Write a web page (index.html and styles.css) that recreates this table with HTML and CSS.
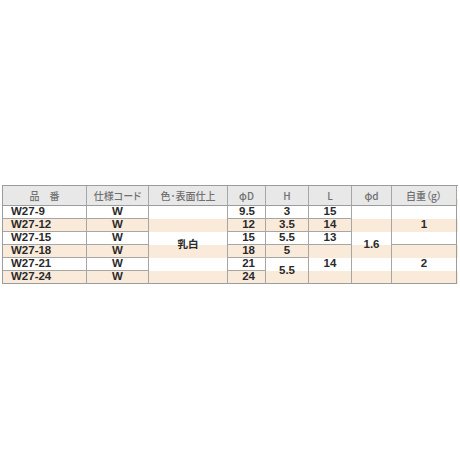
FILE: index.html
```html
<!DOCTYPE html>
<html lang="ja">
<head>
<meta charset="utf-8">
<link rel="stylesheet" href="styles.css">
</head>
<body>
<div class="spec">
  <div class="hd">品　番</div>
  <div class="hd">仕様コード</div>
  <div class="hd">色･表面仕上</div>
  <div class="hd">φD</div>
  <div class="hd">H</div>
  <div class="hd">L</div>
  <div class="hd">φd</div>
  <div class="hd">自重（g）</div>

  <div class="c code r1">W27-9</div>
  <div class="c mid r1 c2">W</div>
  <div class="c mid cj c3 span6">乳白</div>
  <div class="c num r1 c4">9.5</div>
  <div class="c mid r1 c5">3</div>
  <div class="c mid r1 c6">15</div>
  <div class="c mid c7 span6">1.6</div>
  <div class="c mid c8 span3a">1</div>

  <div class="c code r2">W27-12</div>
  <div class="c mid r2 c2">W</div>
  <div class="c num r2 c4">12</div>
  <div class="c mid r2 c5">3.5</div>
  <div class="c mid r2 c6">14</div>

  <div class="c code r3">W27-15</div>
  <div class="c mid r3 c2">W</div>
  <div class="c num r3 c4">15</div>
  <div class="c mid r3 c5">5.5</div>
  <div class="c mid r3 c6">13</div>

  <div class="c code r4">W27-18</div>
  <div class="c mid r4 c2">W</div>
  <div class="c num r4 c4">18</div>
  <div class="c mid r4 c5">5</div>
  <div class="c mid c6 span3b">14</div>
  <div class="c mid c8 span3b">2</div>

  <div class="c code r5">W27-21</div>
  <div class="c mid r5 c2">W</div>
  <div class="c num r5 c4">21</div>
  <div class="c mid c5 span2">5.5</div>

  <div class="c code r6">W27-24</div>
  <div class="c mid r6 c2">W</div>
  <div class="c num r6 c4">24</div>
</div>
</body>
</html>
```

FILE: styles.css
```css
html, body {
  margin: 0;
  padding: 0;
  background: #ffffff;
}

body {
  width: 460px;
  height: 460px;
  padding-top: 185px;
  padding-left: 2px;
  box-sizing: border-box;
}

.spec {
  display: grid;
  width: 455px;
  grid-template-columns: 84px 62px 79px 38px 43px 43px 40px 65px;
  grid-template-rows: 20px repeat(6, 13px);
  border-left: 1px solid #9c9c9c;
  border-top: 1px solid #9c9c9c;
  background-image: repeating-linear-gradient(to bottom, #ffffff 0, #ffffff 13px, #faeada 13px, #faeada 26px);
  background-position: 0 20px;
  font-family: "Liberation Sans", Arial, sans-serif;
}

.hd {
  background: #e8e8e8;
  color: #707070;
  font-family: "Noto Sans CJK JP", "Noto Sans", sans-serif;
  font-size: 10px;
  font-weight: 500;
  font-feature-settings: "palt";
  display: flex;
  align-items: center;
  justify-content: center;
  border-right: 1px solid #a6a6a6;
  border-bottom: 1px solid #9c9c9c;
  box-sizing: border-box;
  line-height: 1;
}

.c {
  display: flex;
  align-items: center;
  border-right: 1px solid #a6a6a6;
  border-bottom: 1px solid #a6a6a6;
  box-sizing: border-box;
  font-size: 11.5px;
  font-weight: bold;
  color: #2a2a2a;
  line-height: 1;
}

.code {
  grid-column: 1;
  padding-left: 8px;
}

.mid { justify-content: center; }

.num {
  justify-content: flex-end;
  padding-right: 10px;
}

.cj {
  font-family: "Noto Sans CJK JP", sans-serif;
  font-size: 10.5px;
}

.c8 { border-right-color: #9c9c9c; }
.r6, .span6, .span2, .span3b { border-bottom-color: #9c9c9c; }

.r1 { grid-row: 2; }
.r2 { grid-row: 3; }
.r3 { grid-row: 4; }
.r4 { grid-row: 5; }
.r5 { grid-row: 6; }
.r6 { grid-row: 7; }

.c2 { grid-column: 2; }
.c3 { grid-column: 3; }
.c4 { grid-column: 4; }
.c5 { grid-column: 5; }
.c6 { grid-column: 6; }
.c7 { grid-column: 7; }
.c8 { grid-column: 8; }

.span6 { grid-row: 2 / span 6; }
.span3a { grid-row: 2 / span 3; }
.span3b { grid-row: 5 / span 3; }
.span2 { grid-row: 6 / span 2; }
```
